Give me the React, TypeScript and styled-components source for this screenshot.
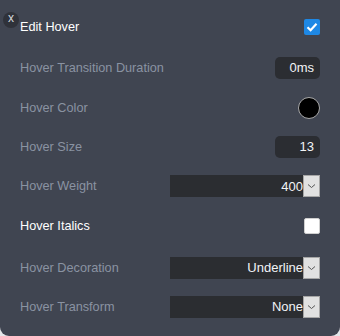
import React, { FC } from 'react';
import styled, { createGlobalStyle } from 'styled-components';

const GlobalStyle = createGlobalStyle`
    html, body {
        margin: 0;
        padding: 0;
        background: #e4e6e9;
    }
    body {
        font-family: "Liberation Sans", Arial, sans-serif;
    }
`;

const Panel = styled.div`
    position: relative;
    box-sizing: border-box;
    width: 340px;
    height: 336px;
    padding: 7px 20px 0 20px;
    background-color: #404551;
    border-bottom-left-radius: 9px;
    border-bottom-right-radius: 9px;
    display: flex;
    flex-direction: column;
`;

const CloseButton = styled.div`
    position: absolute;
    left: 3px;
    top: 12px;
    width: 16px;
    height: 16px;
    border-radius: 50%;
    background-color: #2f323a;
    color: #d4d8de;
    font-size: 12px;
    line-height: 12px;
    text-align: center;
`;

const Row = styled.div<{ h?: number }>`
    display: flex;
    align-items: center;
    height: ${props => props.h ?? 40}px;
`;

const Label = styled.div<{ active?: boolean }>`
    width: 150px;
    font-size: 12.7px;
    color: ${props => props.active ? '#ffffff' : '#8a93a2'};
    white-space: nowrap;
`;

const Control = styled.div`
    flex: 1;
    display: flex;
    justify-content: flex-end;
    align-items: center;
`;

const CheckBox = styled.div<{ checked?: boolean }>`
    width: 16px;
    height: 16px;
    border-radius: 2px;
    box-sizing: border-box;
    background-color: ${props => props.checked ? '#1e88e5' : '#ffffff'};
    border: ${props => props.checked ? 'none' : '1px solid #cfcfcf'};
    display: flex;
    align-items: center;
    justify-content: center;
`;

const NumberBox = styled.div`
    box-sizing: border-box;
    width: 45px;
    height: 22px;
    padding: 0 6px;
    border-radius: 5px;
    background-color: #2b2d32;
    color: #f2f4f7;
    font-size: 13px;
    display: flex;
    align-items: center;
    justify-content: flex-end;
`;

const ColorDot = styled.div<{ color: string }>`
    box-sizing: border-box;
    width: 22px;
    height: 22px;
    border-radius: 50%;
    background-color: ${props => props.color};
    border: 1.5px solid #a9a9a9;
`;

const Select = styled.div`
    width: 150px;
    height: 22px;
    display: flex;
    background-color: #2b2d31;
`;

const SelectValue = styled.div`
    flex: 1;
    display: flex;
    align-items: center;
    justify-content: flex-end;
    color: #f2f4f7;
    font-size: 13px;
`;

const DropButton = styled.div`
    box-sizing: border-box;
    width: 17px;
    height: 22px;
    background-color: #e1e1e1;
    border: 1px solid #a6a6a6;
    display: flex;
    align-items: center;
    justify-content: center;
`;

const Check: FC = () => (
    <svg width="12" height="10" viewBox="0 0 12 10">
        <path d="M1.5 5.2 L4.6 8.2 L10.5 1.8" fill="none" stroke="#ffffff" strokeWidth="2.2" />
    </svg>
);

const Chevron: FC = () => (
    <svg width="9" height="6" viewBox="0 0 9 6">
        <path d="M1 1.5 L4.5 4.5 L8 1.5" fill="none" stroke="#555555" strokeWidth="1" />
    </svg>
);

const Dropdown: FC<{ value: string }> = ({ value }) => (
    <Select>
        <SelectValue>{value}</SelectValue>
        <DropButton><Chevron /></DropButton>
    </Select>
);

const App: FC = () => {
    return (
        <>
            <GlobalStyle />
            <Panel>
                <CloseButton>x</CloseButton>
                <Row h={40}>
                    <Label active>Edit Hover</Label>
                    <Control><CheckBox checked><Check /></CheckBox></Control>
                </Row>
                <Row h={41}>
                    <Label>Hover Transition Duration</Label>
                    <Control><NumberBox>0ms</NumberBox></Control>
                </Row>
                <Row h={39}>
                    <Label>Hover Color</Label>
                    <Control><ColorDot color="#000000" /></Control>
                </Row>
                <Row h={39}>
                    <Label>Hover Size</Label>
                    <Control><NumberBox>13</NumberBox></Control>
                </Row>
                <Row h={40}>
                    <Label>Hover Weight</Label>
                    <Control><Dropdown value="400" /></Control>
                </Row>
                <Row h={39}>
                    <Label active>Hover Italics</Label>
                    <Control><CheckBox /></Control>
                </Row>
                <Row h={45}>
                    <Label>Hover Decoration</Label>
                    <Control><Dropdown value="Underline" /></Control>
                </Row>
                <Row h={33}>
                    <Label>Hover Transform</Label>
                    <Control><Dropdown value="None" /></Control>
                </Row>
            </Panel>
        </>
    );
};

export default App;
